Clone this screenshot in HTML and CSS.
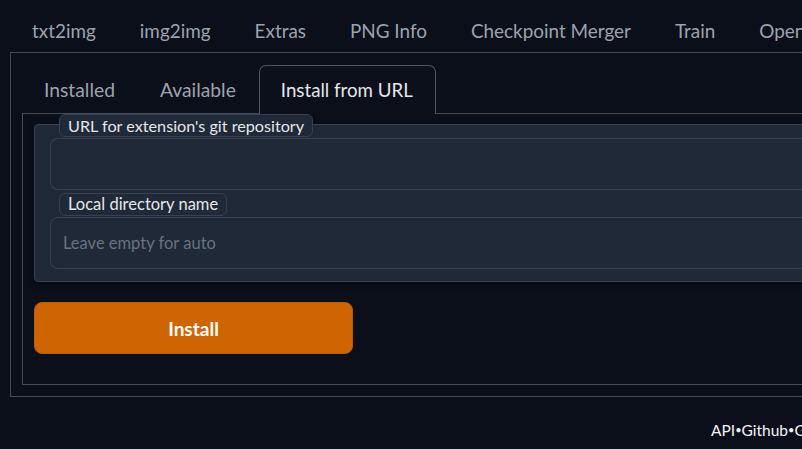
FILE: index.html
```html
<!DOCTYPE html>
<html>
<head>
<meta charset="utf-8">
<link rel="stylesheet" href="styles.css">
</head>
<body>
<div class="page">
  <nav class="topnav">
    <button class="toptab">txt2img</button>
    <button class="toptab">img2img</button>
    <button class="toptab">Extras</button>
    <button class="toptab">PNG Info</button>
    <button class="toptab">Checkpoint Merger</button>
    <button class="toptab">Train</button>
    <button class="toptab">OpenPose Editor</button>
    <button class="toptab">Settings</button>
  </nav>
  <section class="outer">
    <nav class="subnav">
      <button class="subtab">Installed</button>
      <button class="subtab">Available</button>
      <button class="subtab selected">Install from URL</button>
    </nav>
    <div class="inner">
      <div class="form">
        <label class="pill first">URL for extension's git repository</label>
        <div class="input"></div>
        <label class="pill second">Local directory name</label>
        <div class="input"><span class="placeholder">Leave empty for auto</span></div>
      </div>
      <button class="install">Install</button>
    </div>
  </section>
  <footer class="footer">API<span class="dot">•</span>Github<span class="dot">•</span>Gradio<span class="dot">•</span>Reload UI</footer>
</div>
</body>
</html>
```
FILE: styles.css
```css
html, body {
  margin: 0;
  padding: 0;
  background: #0b0f19;
  overflow: hidden;
}
body {
  font-family: Lato, "Noto Sans", sans-serif;
  color: #e5e7eb;
}
.page {
  width: 1200px;
  padding-left: 10px;
  box-sizing: border-box;
}
button {
  font-family: inherit;
  background: none;
  border: none;
  margin: 0;
  cursor: pointer;
}
.topnav {
  display: flex;
  margin-top: 8px;
  height: 44px;
}
.toptab {
  height: 44px;
  padding: 0 22px;
  font-size: 18.9px;
  color: #9ca3af;
  white-space: nowrap;
}
.outer {
  border: 1px solid #434b5b;
  padding: 12px 0 11px 11px;
}
.subnav {
  display: flex;
  height: 48px;
}
.subtab {
  height: 48px;
  padding: 0 22px 0 21px;
  font-size: 19.3px;
  color: #9ca3af;
  border: 1px solid transparent;
  border-bottom: none;
  white-space: nowrap;
}
.subtab.selected {
  color: #e5e7eb;
  border-color: #4b5563;
  border-radius: 7px 7px 0 0;
  background: #0b0f19;
  height: 49px;
  margin-bottom: -1px;
  position: relative;
  z-index: 1;
  padding: 0 22px 0 21px;
  font-size: 18.7px;
}
.inner {
  border: 1px solid #434b5b;
  padding: 10px 0 30px 11px;
  display: flex;
  flex-direction: column;
  gap: 20px;
}
.form {
  background: #1f2937;
  border: 1px solid #374151;
  border-radius: 4px 0 0 4px;
  padding: 0 0 12px 15px;
  display: flex;
  flex-direction: column;
  align-items: flex-start;
  box-shadow: -2px 2px 6px rgba(0,0,0,0.35);
}
.pill {
  display: block;
  height: 21px;
  line-height: 21px;
  padding: 0 8px;
  margin-left: 9px;
  background: #1f2937;
  border: 1px solid #374151;
  border-radius: 6px;
  font-size: 16.2px;
  color: #e5e7eb;
}
.pill.first {
  margin-top: -11px;
}
.pill.second {
  margin-top: 3px;
  font-size: 16.5px;
}
.input {
  align-self: stretch;
  height: 50px;
  margin-top: 1px;
  border: 1px solid #374151;
  border-radius: 8px 0 0 8px;
  border-right: none;
  background: #1f2937;
  display: flex;
  align-items: center;
  padding-left: 12px;
}
.placeholder {
  font-size: 16.5px;
  color: #6b7280;
}
.install {
  width: 319px;
  height: 52px;
  background: #cf6500;
  border: 1px solid #b85a00;
  border-radius: 8px;
  color: #ffffff;
  font-weight: 700;
  font-size: 19px;
}
.footer {
  margin: 24px 0 0 701px;
  font-size: 15.5px;
  color: #f3f4f6;
  white-space: nowrap;
}
.dot {
  font-size: 11px;
  vertical-align: 2px;
}
```
